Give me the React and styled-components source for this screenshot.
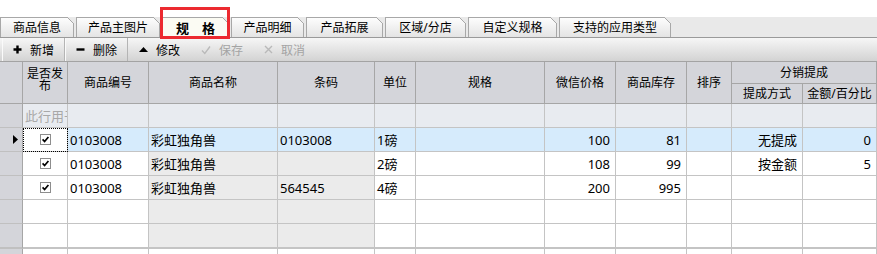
import React from "react"
import styled, { createGlobalStyle, css } from "styled-components"

const GlobalStyle = createGlobalStyle`
    html, body {
        margin: 0;
        padding: 0;
        background: #fff;
    }
    body {
        font-family: "Noto Sans", "Noto Sans CJK SC", sans-serif;
        font-size: 12px;
        color: #000;
    }
`

const Page = styled.div`
    width: 877px;
    height: 254px;
    padding-top: 17px;
    box-sizing: border-box;
    overflow: hidden;
`

const TabStrip = styled.div`
    display: flex;
    align-items: flex-start;
    gap: 2px;
    height: 20px;
    background: #e9e9e9;
    border-bottom: 1px solid #9a9a9a;
`

const Tab = styled.div`
    position: relative;
    box-sizing: border-box;
    width: ${p => p.$width}px;
    height: 20px;
    border: 1px solid #a8a8a8;
    border-bottom: none;
    background: linear-gradient(#fdfdfd, #e4e4e4);
    font-size: 12px;
    line-height: 19px;
    text-align: center;
    white-space: nowrap;

    &::after {
        content: "";
        position: absolute;
        top: -1px;
        right: -1px;
        width: 7px;
        height: 7px;
        background: linear-gradient(
            45deg,
            transparent 0 calc(50% - 0.7px),
            #a8a8a8 calc(50% - 0.7px) calc(50% + 0.7px),
            #e9e9e9 calc(50% + 0.7px)
        );
    }

    ${p =>
        p.$active &&
        css`
            height: 21px;
            margin-bottom: -1px;
            z-index: 1;
            background: #fbfbf3;
            font-size: 13px;
            font-weight: bold;
            line-height: 20px;
        `}

    ${p =>
        p.$marked &&
        css`
            &::before {
                content: "";
                position: absolute;
                top: -11px;
                left: -3px;
                right: -2px;
                bottom: -1px;
                border: 3px solid #ec2a30;
                pointer-events: none;
                z-index: 2;
            }
        `}
`

const Toolbar = styled.div`
    display: flex;
    align-items: stretch;
    height: 23px;
    padding-left: 2px;
    background: linear-gradient(#f6f6f6, #d3d3d3);
`

const ToolButton = styled.div`
    display: flex;
    align-items: center;
    gap: 8px;
    padding: 0 10px 0 ${p => (p.$boxed ? "10px" : "11px")};
    font-size: 12px;
    color: ${p => (p.$disabled ? "#a4a4a4" : "#000")};

    ${p =>
        p.$boxed &&
        css`
            border-left: 1px solid #fafafa;
            border-right: 1px solid #b4b4b4;
        `}
`

const Grid = styled.div`
    display: grid;
    grid-template-columns: 23px 45px 81px 129px 97px 41px 129px 71px 71px 45px 71px 74px;
    grid-template-rows: 22px 20px 24px 24px 24px 24px 24px 25px 24px;
    border-top: 1px solid #a3a3a3;
    font-size: 13px;
`

const HeadCell = styled.div`
    box-sizing: border-box;
    display: flex;
    align-items: center;
    justify-content: center;
    padding: ${p => (p.$tight ? "0 3px 6px" : "0 3px")};
    text-align: center;
    line-height: ${p => (p.$tight ? "12px" : "14px")};
    background: #d4d5da;
    border-right: 1px solid #a6a6a6;
    border-bottom: 1px solid #a6a6a6;
    font-size: 12px;
    overflow: hidden;
    ${p => p.$rows && `grid-row: span ${p.$rows};`}
    ${p => p.$cols && `grid-column: span ${p.$cols};`}
`

const RowHead = styled.div`
    box-sizing: border-box;
    display: flex;
    align-items: center;
    justify-content: flex-end;
    padding-right: 4px;
    background: #d4d5da;
    border-right: 1px solid #a6a6a6;
    border-bottom: ${p => (p.$thick ? "2px" : "1px")} solid #c0c0c0;
`

const tones = {
    white: "#ffffff",
    filter: "#e8ebf0",
    selected: "#d6ebfc",
    readonly: "#ebebeb",
}

const Cell = styled.div`
    box-sizing: border-box;
    display: flex;
    align-items: center;
    justify-content: ${p => (p.$align === "right" ? "flex-end" : p.$align === "center" ? "center" : "flex-start")};
    padding: 0 ${p => (p.$align === "right" ? "5px" : "2px")};
    background: ${p => tones[p.$tone]};
    border-right: 1px solid #c4c4c4;
    border-bottom: ${p => (p.$thick ? "2px" : "1px")} solid #c4c4c4;
    color: ${p => (p.$muted ? "#a8a8a8" : "#000")};
    white-space: nowrap;
    overflow: hidden;

    ${p =>
        p.$focus &&
        css`
            outline: 1px dotted #000;
            outline-offset: -1px;
        `}
`

const PlusIcon = () => (
    <svg width="9" height="9" viewBox="0 0 9 9">
        <path d="M4.5 0.5v8M0.5 4.5h8" stroke="#000" strokeWidth="2.4" />
    </svg>
)

const MinusIcon = () => (
    <svg width="9" height="9" viewBox="0 0 9 9">
        <path d="M0.5 4.5h8" stroke="#000" strokeWidth="2.4" />
    </svg>
)

const UpIcon = () => (
    <svg width="9" height="7" viewBox="0 0 9 7">
        <polygon points="0,6 4.5,1 9,6" fill="#000" />
    </svg>
)

const CheckIcon = () => (
    <svg width="10" height="10" viewBox="0 0 10 10">
        <path d="M1 5.5l2.8 3L9 1.5" stroke="#b9b9b9" strokeWidth="1.3" fill="none" />
    </svg>
)

const CrossIcon = () => (
    <svg width="9" height="9" viewBox="0 0 9 9">
        <path d="M1 1l7 7M8 1l-7 7" stroke="#b9b9b9" strokeWidth="1.4" fill="none" />
    </svg>
)

const Checkbox = () => (
    <svg width="11" height="11" viewBox="0 0 11 11">
        <rect x="0.5" y="0.5" width="10" height="10" fill="#fff" stroke="#8d8d8d" />
        <path d="M2.6 5.4l2 2.1L8.4 3" stroke="#000" strokeWidth="1.7" fill="none" />
    </svg>
)

const Pointer = () => (
    <svg width="5" height="9" viewBox="0 0 5 9">
        <polygon points="0,0 5,4.5 0,9" fill="#000" />
    </svg>
)

const tabs = [
    { label: "商品信息", width: 74 },
    { label: "产品主图片", width: 84 },
    { label: "规\u3000格", width: 67, active: true },
    { label: "产品明细", width: 73 },
    { label: "产品拓展", width: 77 },
    { label: "区域/分店", width: 81 },
    { label: "自定义规格", width: 89 },
    { label: "支持的应用类型", width: 112 },
]

const columns = [
    { key: "pub", align: "center" },
    { key: "code" },
    { key: "name", readonly: true },
    { key: "barcode", readonly: true },
    { key: "unit" },
    { key: "spec" },
    { key: "price", align: "right" },
    { key: "stock", align: "right" },
    { key: "sort" },
    { key: "mode", align: "right" },
    { key: "amount", align: "right" },
]

const rows = [
    { pub: true, code: "0103008", name: "彩虹独角兽", barcode: "0103008", unit: "1磅", price: "100", stock: "81", mode: "无提成", amount: "0" },
    { pub: true, code: "0103008", name: "彩虹独角兽", barcode: "", unit: "2磅", price: "108", stock: "99", mode: "按金额", amount: "5" },
    { pub: true, code: "0103008", name: "彩虹独角兽", barcode: "564545", unit: "4磅", price: "200", stock: "995" },
    {},
    {},
    { partial: true },
]

const App = () => {
    return (
        <Page>
            <GlobalStyle />
            <TabStrip>
                {tabs.map(t => (
                    <Tab key={t.label} $width={t.width} $active={t.active} $marked={t.active}>
                        {t.label}
                    </Tab>
                ))}
            </TabStrip>
            <Toolbar>
                <ToolButton $boxed>
                    <PlusIcon />
                    新增
                </ToolButton>
                <ToolButton $boxed>
                    <MinusIcon />
                    删除
                </ToolButton>
                <ToolButton>
                    <UpIcon />
                    修改
                </ToolButton>
                <ToolButton $disabled>
                    <CheckIcon />
                    保存
                </ToolButton>
                <ToolButton $disabled>
                    <CrossIcon />
                    取消
                </ToolButton>
            </Toolbar>
            <Grid>
                <HeadCell $rows={2} />
                <HeadCell $rows={2} $tight>
                    是否发布
                </HeadCell>
                <HeadCell $rows={2}>商品编号</HeadCell>
                <HeadCell $rows={2}>商品名称</HeadCell>
                <HeadCell $rows={2}>条码</HeadCell>
                <HeadCell $rows={2}>单位</HeadCell>
                <HeadCell $rows={2}>规格</HeadCell>
                <HeadCell $rows={2}>微信价格</HeadCell>
                <HeadCell $rows={2}>商品库存</HeadCell>
                <HeadCell $rows={2}>排序</HeadCell>
                <HeadCell $cols={2}>分销提成</HeadCell>
                <HeadCell>提成方式</HeadCell>
                <HeadCell>金额/百分比</HeadCell>

                <RowHead />
                {columns.map((c, i) => (
                    <Cell key={c.key} $tone="filter" $muted>
                        {i === 0 ? "此行用于过滤" : ""}
                    </Cell>
                ))}

                {rows.map((r, ri) => {
                    const selected = ri === 0
                    const thick = ri === 4
                    return (
                        <React.Fragment key={ri}>
                            <RowHead $thick={thick}>{selected && <Pointer />}</RowHead>
                            {columns.map(c => {
                                let tone = "white"
                                if (selected) tone = c.key === "pub" ? "white" : "selected"
                                else if (c.readonly && !r.partial) tone = "readonly"
                                return (
                                    <Cell
                                        key={c.key}
                                        $tone={tone}
                                        $align={c.align}
                                        $thick={thick}
                                        $focus={selected && c.key === "pub"}
                                    >
                                        {c.key === "pub" ? r.pub && <Checkbox /> : r[c.key]}
                                    </Cell>
                                )
                            })}
                        </React.Fragment>
                    )
                })}
            </Grid>
        </Page>
    )
}

export default App
